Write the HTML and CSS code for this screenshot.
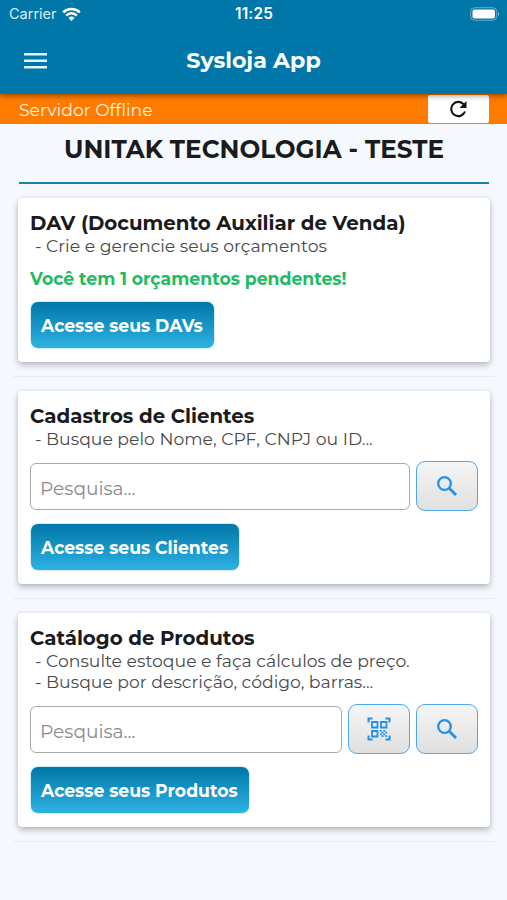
FILE: index.html
```html
<!DOCTYPE html>
<html lang="pt-BR">
<head>
	<meta charset="utf-8">
	<meta name="viewport" content="width=device-width, initial-scale=1">
	<title>Sysloja App</title>
	<link rel="stylesheet" href="styles.css">
</head>
<body>
	<header>
		<div class="status">
			<div class="carrier">
				<span>Carrier</span>
				<svg width="19" height="14" viewBox="0 0 19 14" fill="none" stroke="#fff" stroke-width="2.5">
					<path d="M1.2 5.3a11.8 11.8 0 0 1 16.6 0M4.2 8.5a7.5 7.5 0 0 1 10.6 0"/>
					<path d="M9.5 14 6.500 10.900a4.300 4.300 0 0 1 6 0z" fill="#fff" stroke="none"/>
				</svg>
			</div>
			<span class="clock">11:25</span>
			<div class="battery">
				<svg width="30" height="14" viewBox="0 0 30 14">
					<rect x=".7" y=".7" width="26" height="12.6" rx="4" fill="none" stroke="#fff" stroke-opacity=".4"/>
					<rect x="2.5" y="2.5" width="22.5" height="9" rx="2" fill="#fff"/>
					<path d="M28 5v4c1.6-.8 1.6-3.2 0-4z" fill="#fff" fill-opacity=".5"/>
				</svg>
			</div>
		</div>
		<div class="toolbar">
			<button class="menu" aria-label="Menu">
				<svg width="23" height="16" viewBox="0 0 23 16" fill="#e2f4fb"><path d="M0 0h23v2.5H0zM0 6.5h23V9H0zM0 13h23v2.5H0z"/></svg>
			</button>
			<h1>Sysloja App</h1>
		</div>
	</header>
	<div class="offline">
		<span>Servidor Offline</span>
		<button class="reload" aria-label="Recarregar">
			<svg width="18" height="18" viewBox="0 0 18 18"><path d="M13.6 4.2A7.1 7.1 0 1 0 15 11.500" fill="none" stroke="#111" stroke-width="2.1"/><path d="M16.500 1v7h-7z" fill="#111"/></svg>
		</button>
	</div>
	<main>
		<h2>UNITAK TECNOLOGIA - TESTE</h2>

		<section class="card">
			<h3>DAV (Documento Auxiliar de Venda)</h3>
			<p>- Crie e gerencie seus orçamentos</p>
			<p class="pending">Você tem 1 orçamentos pendentes!</p>
			<button class="access">Acesse seus DAVs</button>
		</section>

		<section class="card">
			<h3>Cadastros de Clientes</h3>
			<p>- Busque pelo Nome, CPF, CNPJ ou ID...</p>
			<div class="search">
				<input type="text" placeholder="Pesquisa...">
				<button class="icon" aria-label="Buscar">
					<svg width="20" height="20" viewBox="0 0 20 20" fill="none" stroke="#2391e8"><circle cx="7.5" cy="7.5" r="6.3" stroke-width="2.3"/><path d="M12 12l7 7" stroke-width="2.8"/></svg>
				</button>
			</div>
			<button class="access">Acesse seus Clientes</button>
		</section>

		<section class="card">
			<h3>Catálogo de Produtos</h3>
			<p>- Consulte estoque e faça cálculos de preço.</p>
			<p>- Busque por descrição, código, barras...</p>
			<div class="search">
				<input type="text" placeholder="Pesquisa...">
				<button class="icon" aria-label="Ler código">
					<svg width="24" height="24" viewBox="0 0 24 24" fill="none" stroke="#2391e8" stroke-width="2">
						<path d="M1.5 5.5v-4h4M18.5 1.5h4v4M22.5 18.5v4h-4M5.5 22.5h-4v-4"/>
						<path d="M5 5h5.500v5.500H5zM14 5h5.500v5.500H14zM5 14h5.500v5.500H5z" stroke-width="1.8"/>
						<path d="M13 13h1.8v1.8H13zM16.4 13h1.8v1.8h-1.800zM14.7 14.7h1.8v1.8h-1.800zM18.200 14.700H20v1.800h-1.800zM13 16.400h1.800v1.800H13zM16.400 16.400h1.800v1.800h-1.800zM14.700 18.200h1.800V20h-1.800zM18.200 18.200H20V20h-1.800z" fill="#2391e8" stroke="none"/>
					</svg>
				</button>
				<button class="icon" aria-label="Buscar">
					<svg width="20" height="20" viewBox="0 0 20 20" fill="none" stroke="#2391e8"><circle cx="7.5" cy="7.5" r="6.3" stroke-width="2.3"/><path d="M12 12l7 7" stroke-width="2.8"/></svg>
				</button>
			</div>
			<button class="access">Acesse seus Produtos</button>
		</section>
	</main>
</body>
</html>
```
FILE: styles.css
```css
:root {
	--blue: #0077a8;
	--orange: #ff7b00;
	--bg: #f5f9fe;
	--txt: #1a1b1d;
}
* {
	box-sizing: border-box;
}
body {
	margin: 0;
	min-height: 100vh;
	font-family: Montserrat, Inter, sans-serif;
	font-size: 17.25px;
	background-color: var(--bg);
	color: var(--txt);
}
h1, h2, h3, p {
	margin: 0;
	white-space: nowrap;
}
button {
	font-family: inherit;
	border: none;
	padding: 0;
	cursor: pointer;
}
svg {
	display: block;
}
header {
	position: relative;
	height: 94px;
	background-color: var(--blue);
	color: white;
	box-shadow: 0 2px 5px rgba(0, 0, 0, 0.4);
}
.status {
	display: grid;
	grid-template-columns: 1fr auto 1fr;
	align-items: center;
	height: 27px;
	padding: 0 7px 0 9px;
	font-family: Inter, sans-serif;
	font-size: 15px;
}
.carrier {
	display: flex;
	align-items: center;
	gap: 6px;
	font-size: 14.5px;
	color: #d9edf5;
}
.carrier span {
	width: 47px;
}
.clock {
	margin-right: 1px;
	font-size: 15.3px;
	font-weight: 600;
	letter-spacing: 0.2px;
}
.battery {
	justify-self: end;
}
.toolbar {
	display: grid;
	grid-template-columns: 60px 1fr 60px;
	align-items: center;
	height: 67px;
}
.menu {
	background: none;
	margin-left: 24px;
}
h1 {
	font-size: 22.2px;
	text-align: center;
}
.offline {
	display: flex;
	justify-content: space-between;
	height: 30px;
	padding: 1px 18px 1px 19px;
	background-color: var(--orange);
	color: #fff2e0;
	line-height: 30px;
}
.reload {
	display: grid;
	place-items: center;
	width: 61px;
	background-color: white;
	border-radius: 2px;
}
main {
	padding: 0 13px;
}
h2 {
	margin: 0 5px 14px 6px;
	height: 60px;
	line-height: 51px;
	font-size: 24.65px;
	text-align: center;
	border-bottom: solid 2px #1982aa;
}
.card {
	position: relative;
	margin: 0 4px 29px 5px;
	padding: 13px 12px;
	background-color: white;
	border-radius: 4px;
	box-shadow: 0 3px 6px rgba(0, 0, 0, 0.26), 0 0 4px rgba(0, 0, 0, 0.06);
}
.card::after {
	content: "";
	position: absolute;
	left: -5px;
	right: -5px;
	bottom: -15px;
	height: 1px;
	background-color: #e9edf3;
}
h3 {
	font-size: 19.8px;
	line-height: 24px;
}
p {
	padding-left: 5px;
	line-height: 21px;
	color: #4a4b4d;
}
.pending {
	margin-top: 12px;
	padding: 0;
	font-weight: 700;
	color: #22ba62;
}
.access {
	display: block;
	margin-top: 12px;
	padding: 1px 11px 0 10px;
	height: 48px;
	font-size: inherit;
	font-weight: 700;
	white-space: nowrap;
	color: white;
	background-image: linear-gradient(#0077a8, #2eb2e2);
	border: solid 1px #d0edf8;
	border-radius: 8px;
}
.search {
	display: flex;
	align-items: center;
	gap: 6px;
	margin: 12px 0;
}
.search input {
	flex: 1;
	min-width: 0;
	height: 47px;
	padding: 5px 9px 0;
	font-family: inherit;
	font-size: 18.6px;
	background-color: white;
	border: solid 1.5px #aaa;
	border-radius: 6px;
}
.search input::placeholder {
	color: #8b8b8b;
}
.icon {
	display: grid;
	place-items: center;
	width: 62px;
	height: 50px;
	padding: 0 1px 1px 0;
	background-image: linear-gradient(#f5f5f5, #e0e0e0);
	border: solid 1.5px #4ca8f2;
	border-radius: 9px;
}
```
